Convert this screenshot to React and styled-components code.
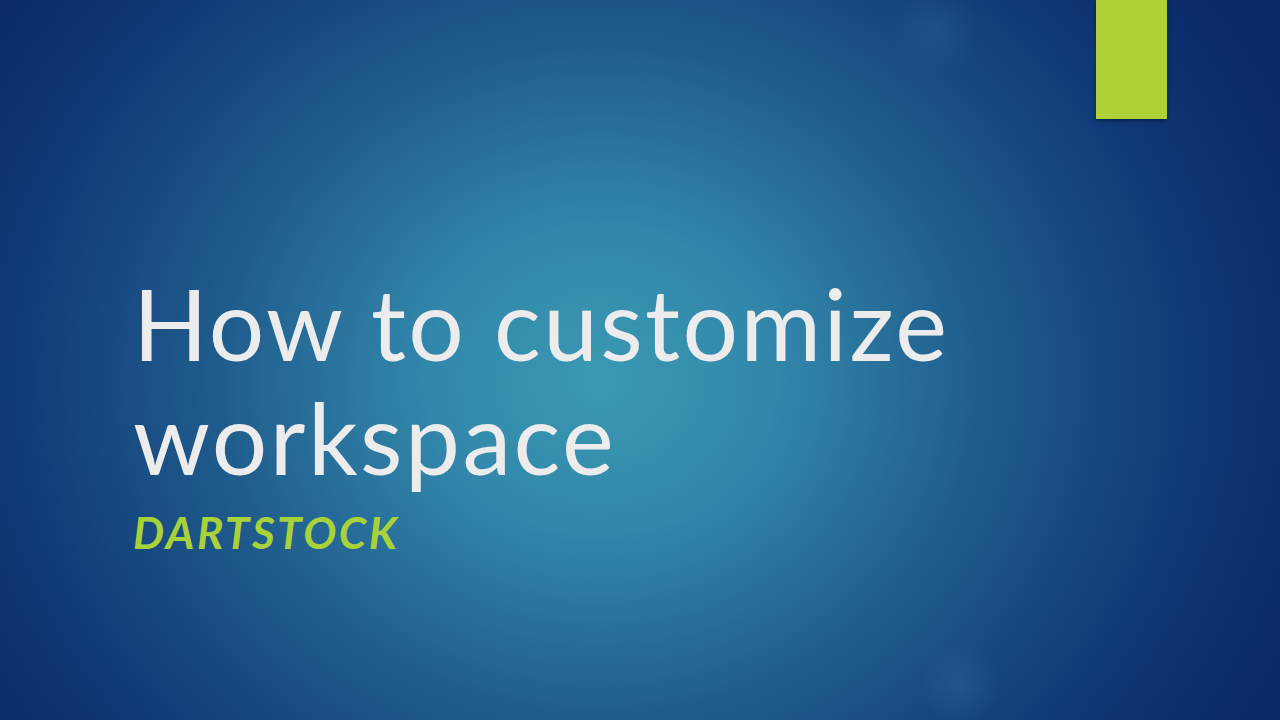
import styled, { createGlobalStyle } from "styled-components";

const GlobalStyle = createGlobalStyle`
  html, body {
    margin: 0;
    padding: 0;
    width: 100%;
    height: 100%;
    overflow: hidden;
  }
`;

const Slide = styled.div`
  width: 1280px;
  height: 720px;
  display: flex;
  flex-direction: column;
  box-sizing: border-box;
  background:
    radial-gradient(circle at 960px 685px, rgba(70, 130, 180, 0.22) 0, rgba(70, 130, 180, 0) 40px),
    radial-gradient(circle at 935px 30px, rgba(70, 130, 180, 0.18) 0, rgba(70, 130, 180, 0) 45px),
    radial-gradient(ellipse 860px 760px at 600px 380px, #3a99b2 0%, #3287ab 20%, #1f5b8c 45%, #113a78 68%, #0a2866 88%, #0a2866 100%);
  background-color: #0a2866;
`;

const TopRow = styled.div`
  display: flex;
  justify-content: flex-end;
  padding-right: 113px;
`;

const Accent = styled.div`
  width: 71px;
  height: 119px;
  background: #add136;
  box-shadow: 0 2px 4px rgba(0, 20, 40, 0.5);
`;

const TitleBlock = styled.div`
  display: flex;
  flex-direction: column;
  padding-left: 133px;
  margin-top: 147px;
`;

const Title = styled.h1`
  margin: 0;
  font-family: "Lato", "Liberation Sans", sans-serif;
  font-weight: 400;
  font-size: 98px;
  line-height: 114px;
  color: #ececec;
  letter-spacing: 2.45px;
`;

const Subtitle = styled.div`
  margin-top: 12px;
  font-family: "Lato", "Liberation Sans", sans-serif;
  font-weight: 700;
  font-style: italic;
  font-size: 44px;
  line-height: 53px;
  letter-spacing: 2.5px;
  color: #a9d23a;
`;

export default function App() {
  return (
    <>
      <GlobalStyle />
      <Slide>
        <TopRow>
          <Accent />
        </TopRow>
        <TitleBlock>
          <Title>
            How to customize
            <br />
            workspace
          </Title>
          <Subtitle>DARTSTOCK</Subtitle>
        </TitleBlock>
      </Slide>
    </>
  );
}
